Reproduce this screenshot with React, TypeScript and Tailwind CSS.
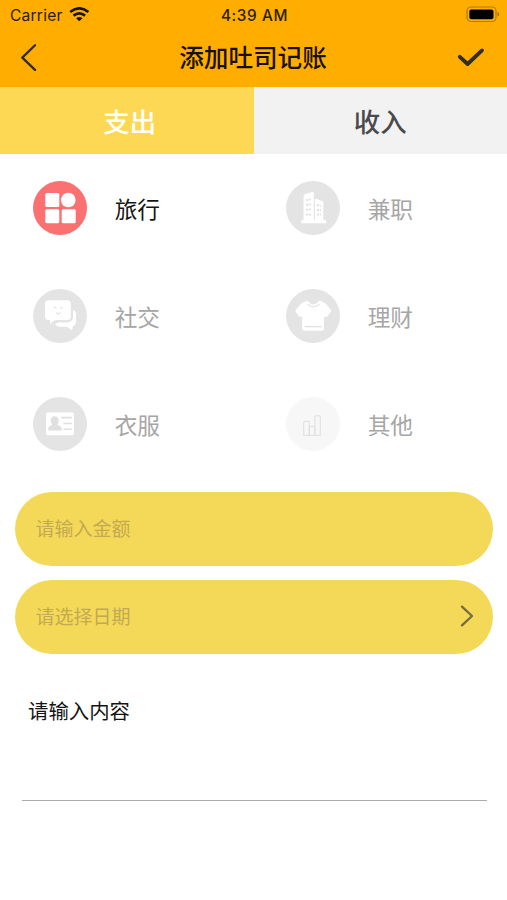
import { useState, type ReactNode } from 'react'

interface Category { name: string; bg: string; icon: ReactNode }

const CATEGORIES: Category[] = [
  {
    name: '旅行',
    bg: 'bg-[#fb7071]',
    icon: (
      <g fill="#fff">
        <rect x="12.3" y="12" width="14" height="14" rx="1.5" />
        <circle cx="35.3" cy="19" r="7.3" />
        <rect x="12.3" y="28.3" width="14" height="14" rx="1.5" />
        <rect x="28.7" y="28.3" width="14" height="14" rx="1.5" />
      </g>
    ),
  },
  {
    name: '兼职',
    bg: 'bg-[#e4e4e4]',
    icon: (
      <>
        <path
          d="M15.4 42.3v-2.6q0-1 1-1h1.2V14.4q0-.9 1-1.1l7.8-2.2q1.4-.3 1.4 1.1v26.5h1.1V18.6q0-1.2 1.1-.9l6.3 2.2q1 .3 1 1.3v17.5h1.3q1.6 0 1.6 1.6v2z"
          fill="#fff"
        />
        <path
          d="M20 19.2l5-.9M20 24l5-.6M20 28.8l5-.4M20 33.6h5M31 24l4 .8M31 28.8l4 .4M31 33.6h4"
          stroke="#e0e0e0"
          strokeWidth="1.8"
          strokeDasharray="2.1 .7"
        />
      </>
    ),
  },
  {
    name: '社交',
    bg: 'bg-[#e4e4e4]',
    icon: (
      <>
        <path
          d="M15.5 11.3h18.8q3.5 0 3.5 3.5v12.8q0 3.5-3.5 3.5H23.5q-2.4 0-4.2 2l-1.8 1.8-.6-3.8h-1.4q-3.5 0-3.5-3.5V14.8q0-3.5 3.5-3.5z"
          fill="#fff"
        />
        <path
          d="M40 21q3 1 3 4.7v7.4q0 3.2-3.2 4.3l-.8 4.1-4.9-3.7h-7q-3.4 0-5.2-3.1 1.4.4 3.2-1.3h9.2q5.7 0 5.7-5.8z"
          fill="#fff"
        />
        <path d="M20.8 19.2l1.3-.8 1.3.8M27.2 19.2l1.3-.8 1.3.8M23 23.6q2 2.7 4.4 0" stroke="#dadada" strokeWidth="1" fill="none" />
      </>
    ),
  },
  {
    name: '理财',
    bg: 'bg-[#e4e4e4]',
    icon: (
      <>
        <path
          d="M20.2 12.1q1.4-.9 2.3.4 4.9 6.2 9.8 0 1-1.3 2.3-.4 4 1.4 5.7 3.2l4.5 5.4q.8 1 0 2l-3 4.2q-.7.9-1.7.9H38v12q0 2-2 2H18.2q-2 0-2-2v-12h-2q-1 0-1.6-.9l-2.8-4.2q-.6-1 .1-2l4.5-5.4q1.6-1.8 5.8-3.2z"
          fill="#fff"
        />
        <path d="M21.3 15q6 5.5 12.2 0" stroke="#e4e4e4" strokeWidth="1.1" fill="none" />
        <path d="M19.5 37.6h15.8" stroke="#e0e0e0" strokeWidth="1.3" strokeLinecap="round" />
      </>
    ),
  },
  {
    name: '衣服',
    bg: 'bg-[#e4e4e4]',
    icon: (
      <>
        <rect x="13" y="15.6" width="28" height="22.6" rx="1.6" fill="#fff" />
        <path
          d="M21.7 19.3c2.6 0 4 1.9 4 4.2 0 1.7-.6 2.9-1.4 3.9 0 1 3.9 1.2 4.3 3.4l.2 2.6H15.2l.2-2.6c.4-2.2 3.8-2.4 3.8-3.4-.8-1-1.4-2.2-1.4-3.9 0-2.3 1.3-4.2 3.9-4.2z"
          fill="#e0e0e0"
        />
        <path d="M28.6 20.6h9.6M31 26.5h7.2M31 32.3h7.2" stroke="#e0e0e0" strokeWidth="1.6" strokeLinecap="round" />
      </>
    ),
  },
  {
    name: '其他',
    bg: 'bg-[#f7f7f7]',
    icon: (
      <path
        d="M17.7 24.4h5.6v14h-5.6zM23.3 29.4h5.6v9h-5.6zM28.9 18.8h5.4v19.6h-5.4z"
        stroke="#dcdcdc"
        strokeWidth=".9"
        fill="none"
      />
    ),
  },
]

function StatusBar() {
  return (
    <div className="grid h-[30px] grid-cols-3 items-center pl-[10px] pr-[7px] font-['Inter','Liberation_Sans',sans-serif] text-[#2b2000]">
      <div className="flex items-center gap-[6px]">
        <span className="pt-[1px] text-[15.6px] leading-[29px] tracking-[0.2px]">Carrier</span>
        <svg width="21" height="16" viewBox="0 0 21 16" fill="none" stroke="#1a1300" strokeWidth="2.7">
          <path d="M1.2 5Q10.3-2.3 19.4 5" />
          <path d="M4.5 8.6Q10.3 4 16.1 8.6" />
          <path d="M10.3 14.2L7.1 11.2Q10.3 8.6 13.5 11.2z" fill="#1a1300" stroke="none" />
        </svg>
      </div>
      <span className="pr-[1px] pt-[1px] text-center text-[15.3px] font-medium leading-[29px] tracking-[0.6px]">4:39 AM</span>
      <svg className="mb-[2px] justify-self-end" width="34" height="17" viewBox="0 0 34 17" fill="none">
        <rect x="1" y="1" width="29" height="14.5" rx="4" stroke="#b07a08" strokeWidth="1.2" />
        <rect x="3.3" y="3.4" width="24.2" height="9.8" rx="2" fill="#000" />
        <path d="M31.4 6q1.9.5 1.9 2.2t-1.9 2.2z" fill="#a87506" />
      </svg>
    </div>
  )
}

export default function App() {
  const [tab, setTab] = useState<'out' | 'in'>('out')
  const [selected, setSelected] = useState('旅行')

  return (
    <div className="h-[900px] w-[507px] overflow-hidden bg-white font-['Noto_Sans_CJK_SC',sans-serif]">
      {/* Header */}
      <header className="h-[87px] bg-[#ffae00]">
        <StatusBar />
        <div className="flex h-[54px] items-center justify-between pl-[20px] pr-[22px]">
          <button className="w-[29px]" aria-label="返回">
            <svg width="18" height="28" viewBox="0 0 18 28" fill="none" stroke="#302a18" strokeWidth="2.3" strokeLinecap="round" strokeLinejoin="round">
              <path d="M15 2.2L2.3 14.6 15 26.9" />
            </svg>
          </button>
          <h1 className="pb-[2px] text-[24.6px] font-medium leading-[36px] text-[#171000]">添加吐司记账</h1>
          <button aria-label="完成">
            <svg width="28" height="20" viewBox="0 0 28 20" fill="none" stroke="#302d2a" strokeWidth="3.8" strokeLinecap="round" strokeLinejoin="round">
              <path d="M2.8 9.8l7.8 7.2L25 3.4" />
            </svg>
          </button>
        </div>
      </header>

      {/* Expense / income tabs */}
      <div className="grid h-[67px] grid-cols-2 text-[26.4px] font-medium leading-[66px]">
        <button
          onClick={() => setTab('out')}
          className={tab === 'out' ? 'bg-[#fdd855] pl-[6px] text-white' : 'bg-[#f2f2f2] pl-[6px] text-[#4a4a4a]'}
        >
          支出
        </button>
        <button
          onClick={() => setTab('in')}
          className={tab === 'in' ? 'bg-[#fdd855] text-white' : 'bg-[#f2f2f2] text-[#4a4a4a]'}
        >
          收入
        </button>
      </div>

      {/* Categories */}
      <div className="grid grid-cols-[253px_254px] pt-[0.4px]">
        {CATEGORIES.map((c) => (
          <button key={c.name} onClick={() => setSelected(c.name)} className="flex h-[108px] items-center gap-[27.4px] pl-[33.3px]">
            <span className={`size-[54px] rounded-full ${c.bg}`}>
              <svg width="54" height="54" viewBox="0 0 54 54" fill="none">{c.icon}</svg>
            </span>
            <span className={`pt-[1px] text-[22.7px] leading-[34px] ${selected === c.name ? 'text-[#151515]' : 'text-[#a6a6a6]'}`}>
              {c.name}
            </span>
          </button>
        ))}
      </div>

      {/* Form */}
      <div className="ml-[15px] mr-[14px] mt-[13.3px] space-y-[14px] text-[19px] text-[#c3a952]">
        <div className="flex h-[74px] items-center rounded-full bg-[#f4d958] px-[20.5px]">请输入金额</div>
        <div className="flex h-[74px] items-center justify-between rounded-full bg-[#f4d958] pl-[20.5px] pr-[19.5px]">
          <span>请选择日期</span>
          <svg className="mb-[1px]" width="14" height="22" viewBox="0 0 14 22" fill="none" stroke="#746b48" strokeWidth="2.3" strokeLinecap="round" strokeLinejoin="round">
            <path d="M2 1.6L12 11 2 20.4" />
          </svg>
        </div>
      </div>
      <div className="ml-[22px] mr-[20px] mt-[41.3px] h-[106px] border-b-[1.5px] border-[#ababab] pl-[6px] text-[20.4px] leading-[30px] text-[#151515]">
        请输入内容
      </div>
    </div>
  )
}
